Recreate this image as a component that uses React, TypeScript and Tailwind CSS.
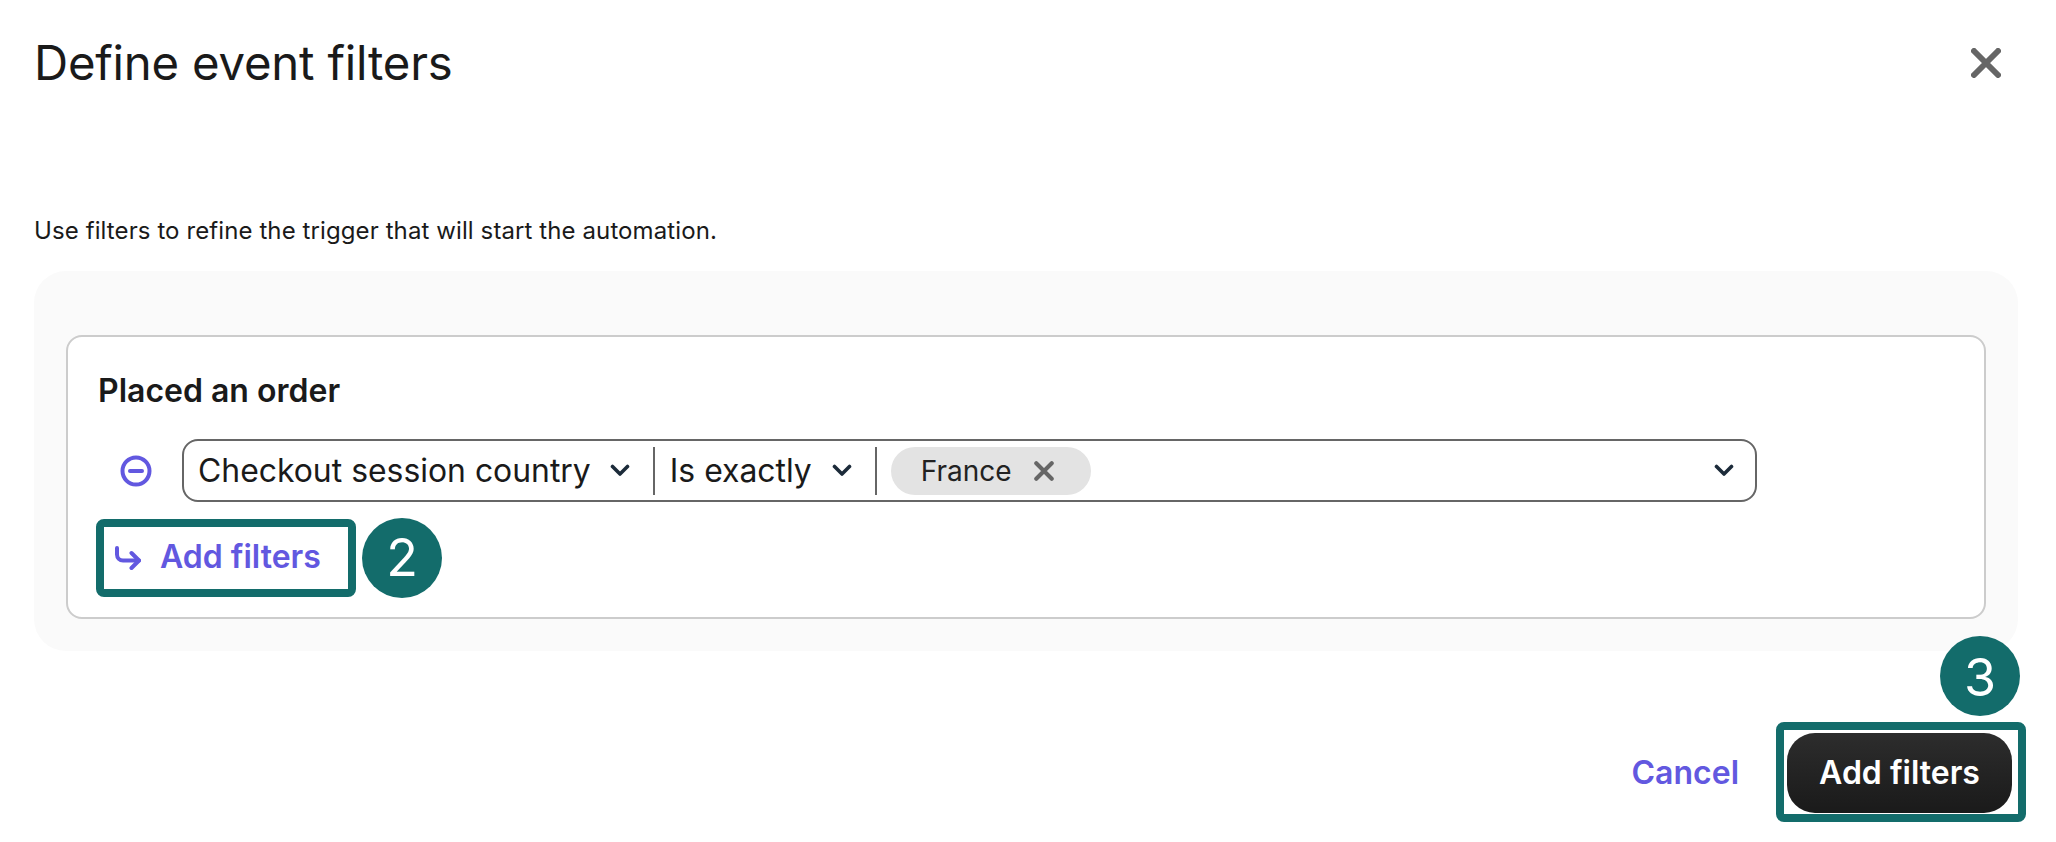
// Define event filters dialog, annotated with step badges

function Chevron() {
  return (
    <svg width="20" height="13" viewBox="0 0 20 13" fill="none" stroke="#1c2b3a" strokeWidth="3.6" strokeLinecap="round" strokeLinejoin="round" className="shrink-0">
      <path d="M2.5 2.5 10 10l7.5-7.5" />
    </svg>
  )
}

function Divider() {
  return <div className="w-[2px] h-[48px] bg-[#666666] shrink-0" />
}

function Badge({ n, className }: { n: string; className: string }) {
  return (
    <div className={`w-[80px] h-[80px] rounded-full bg-[#136c6b] text-white text-[52px] leading-none flex items-center justify-center ${className}`}>
      {n}
    </div>
  )
}

export default function App() {
  return (
    <div className="relative w-[2056px] h-[842px] bg-white pl-[34px] font-['Inter',sans-serif] text-[#1a1a1a] overflow-hidden">
      {/* header */}
      <div className="flex items-start justify-between pt-[35px] pr-[55px] h-[215px]">
        <h1 className="text-[47.3px] leading-[56px] font-normal tracking-[-0.2px]">Define event filters</h1>
        <svg width="30" height="30" viewBox="0 0 30 30" fill="none" stroke="#666666" strokeWidth="6" strokeLinecap="round" className="mt-[13px]">
          <path d="M3 3l24 24M27 3 3 27" />
        </svg>
      </div>

      <p className="text-[24px] leading-[32px] tracking-[0.1px] h-[56px]">Use filters to refine the trigger that will start the automation.</p>

      {/* grey panel */}
      <div className="w-[1984px] h-[380px] bg-[#fafafa] rounded-[32px] pt-[64px] pl-[32px]">
        <div className="w-[1920px] h-[284px] bg-white border-2 border-[#cccccc] rounded-[16px] pl-[28px] pt-[34px]">
          <h2 className="pl-[2px] text-[32px] leading-[40px] font-semibold">Placed an order</h2>

          <div className="mt-[28px] pl-[24px] flex items-center">
            <svg width="32" height="32" viewBox="0 0 32 32" fill="none" stroke="#6258e0" strokeWidth="4" strokeLinecap="round" className="shrink-0">
              <circle cx="16" cy="16" r="13.5" />
              <path d="M10 16h12" />
            </svg>
            <div className="ml-[30px] w-[1575px] h-[63px] border-2 border-[#666666] rounded-[16px] flex items-center pl-[14px] text-[31.9px]">
              <span>Checkout session country</span>
              <div className="ml-[19px] mr-[23px]"><Chevron /></div>
              <Divider />
              <span className="ml-[15px]">Is exactly</span>
              <div className="ml-[20px] mr-[23px]"><Chevron /></div>
              <Divider />
              <div className="ml-[14px] w-[200px] h-[48px] rounded-[24px] bg-[#e3e3e3] flex items-center pl-[30px] text-[28px] text-[#222222]">
                <span>France</span>
                <svg width="20" height="20" viewBox="0 0 22 22" fill="none" stroke="#666666" strokeWidth="4.5" strokeLinecap="round" className="ml-[22px]">
                  <path d="M2.5 2.5l17 17M19.5 2.5l-17 17" />
                </svg>
              </div>
              <div className="ml-auto mr-[21px]"><Chevron /></div>
            </div>
          </div>

          <div className="mt-[16px] flex items-center">
            <div className="w-[260px] h-[78px] border-[8px] border-[#136c6b] rounded-[8px] bg-white flex items-center pl-[11px] text-[#6258e0] text-[32px] font-semibold">
              <svg width="26" height="25" viewBox="0 0 26 25" fill="none" stroke="#6258e0" strokeWidth="4" strokeLinecap="round" strokeLinejoin="round" className="shrink-0">
                <path d="M2 2v6.5a6 6 0 0 0 6 6h16" />
                <path d="M16.5 7l7.5 7.5L16.5 22" />
              </svg>
              <span className="ml-[19px] -mt-[2px]">Add filters</span>
            </div>
            <Badge n="2" className="ml-[6px]" />
          </div>
        </div>
      </div>

      {/* footer */}
      <div className="relative mt-[71px] pr-[30px] flex items-center justify-end">
        <span className="text-[32px] font-semibold text-[#6258e0] mr-[37px] mt-[2px]">Cancel</span>
        <div className="w-[250px] h-[100px] border-[8px] border-[#136c6b] rounded-[8px] bg-white pt-[3px] pl-[3px]">
          <div className="w-[225px] h-[80px] rounded-[28px] bg-gradient-to-b from-[#2d2d2d] to-[#1a1a1a] text-white text-[32px] font-semibold flex items-center justify-center">
            Add filters
          </div>
        </div>
        <Badge n="3" className="absolute top-[-86px] left-[1906px] pt-[3px]" />
      </div>
    </div>
  )
}
